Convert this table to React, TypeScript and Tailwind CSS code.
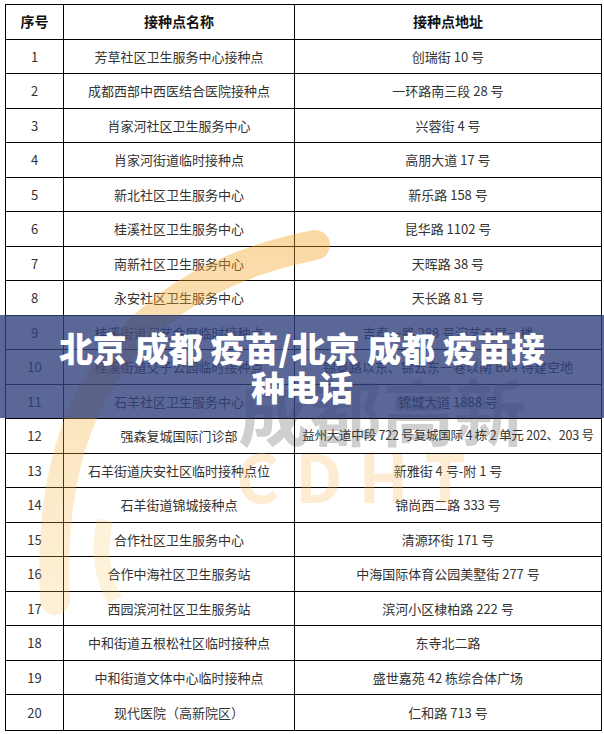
const rows: [string, string, string][] = [
  ["1", "芳草社区卫生服务中心接种点", "创瑞街 10 号"],
  ["2", "成都西部中西医结合医院接种点", "一环路南三段 28 号"],
  ["3", "肖家河社区卫生服务中心", "兴蓉街 4 号"],
  ["4", "肖家河街道临时接种点", "高朋大道 17 号"],
  ["5", "新北社区卫生服务中心", "新乐路 158 号"],
  ["6", "桂溪社区卫生服务中心", "昆华路 1102 号"],
  ["7", "南新社区卫生服务中心", "天晖路 38 号"],
  ["8", "永安社区卫生服务中心", "天长路 81 号"],
  ["9", "桂溪街道演艺会展临时接种点", "吉泰一路 288 号演艺会展一楼"],
  ["10", "桂溪街道交子公园临时接种点", "锦泰路以东、锦云东一巷以南 B04 待建空地"],
  ["11", "石羊社区卫生服务中心", "锦城大道 1888 号"],
  ["12", "强森复城国际门诊部", "益州大道中段 722 号复城国际 4 栋 2 单元 202、203 号"],
  ["13", "石羊街道庆安社区临时接种点位", "新雅街 4 号-附 1 号"],
  ["14", "石羊街道锦城接种点", "锦尚西二路 333 号"],
  ["15", "合作社区卫生服务中心", "清源环街 171 号"],
  ["16", "合作中海社区卫生服务站", "中海国际体育公园美墅街 277 号"],
  ["17", "西园滨河社区卫生服务站", "滨河小区棣柏路 222 号"],
  ["18", "中和街道五根松社区临时接种点", "东寺北二路"],
  ["19", "中和街道文体中心临时接种点", "盛世嘉苑 42 栋综合体广场"],
  ["20", "现代医院（高新院区）", "仁和路 713 号"],
];

const font = { fontFamily: '"Noto Sans CJK SC", "Liberation Sans", sans-serif' };

const Watermark = () => (
  <svg className="absolute left-0 top-0 pointer-events-none" width="604" height="734" viewBox="0 0 604 734">
    <defs>
      <linearGradient id="arc" x1="0" y1="0" x2="0" y2="1">
        <stop offset="0" stopColor="#f4a11f" stopOpacity="0.4" />
        <stop offset="1" stopColor="#f9c25a" stopOpacity="0.25" />
      </linearGradient>
    </defs>
    <path d="M 315 245 Q 40 300 55 600" fill="none" stroke="url(#arc)" strokeWidth="30" strokeLinecap="round" />
    <path d="M 105 520 Q 95 565 115 600" fill="none" stroke="#f9c25a" strokeOpacity="0.22" strokeWidth="16" />
    <text x="236" y="503" fontSize="66" fontWeight="700" fill="#f6b450" fillOpacity="0.26" letterSpacing="16" style={font}>
      CDHT
    </text>
    <text x="238" y="440" fontSize="72" fontWeight="700" fill="#444" fillOpacity="0.26" style={font}>
      成都高新
    </text>
  </svg>
);

export default function App() {
  return (
    <div className="relative w-[604px] h-[734px] overflow-hidden bg-white pt-[4px] pl-[5px]" style={font}>
      <div className="w-[597px] border border-black text-[#333] text-[13px]">
        <div className="grid grid-cols-[58px_231px_1fr] h-[34.5px] border-b border-black font-bold text-[14px] text-[#111]">
          <div className="flex items-center justify-center border-r border-black">序号</div>
          <div className="flex items-center justify-center border-r border-black">接种点名称</div>
          <div className="flex items-center justify-center">接种点地址</div>
        </div>
        {rows.map(([n, name, addr], i) => (
          <div
            key={n}
            className={`grid grid-cols-[58px_231px_1fr] h-[34.5px] ${i < rows.length - 1 ? "border-b border-black" : "h-[33.5px]"}`}
          >
            <div className="flex items-center justify-center border-r border-black">{n}</div>
            <div className="flex items-center justify-center border-r border-black whitespace-nowrap">{name}</div>
            <div className={`flex items-center justify-center whitespace-nowrap ${addr.length > 30 ? "text-[12.5px] tracking-[-0.2px]" : ""}`}>
              {addr}
            </div>
          </div>
        ))}
      </div>

      <Watermark />

      {/* title banner */}
      <div className="absolute left-0 right-0 top-[315px] h-[103px] bg-[#31417d]/80 flex items-center justify-center px-[50px]">
        <h1 className="text-white text-[34px] leading-[39px] font-black text-center">
          北京 成都 疫苗/北京 成都 疫苗接种电话
        </h1>
      </div>
    </div>
  );
}
